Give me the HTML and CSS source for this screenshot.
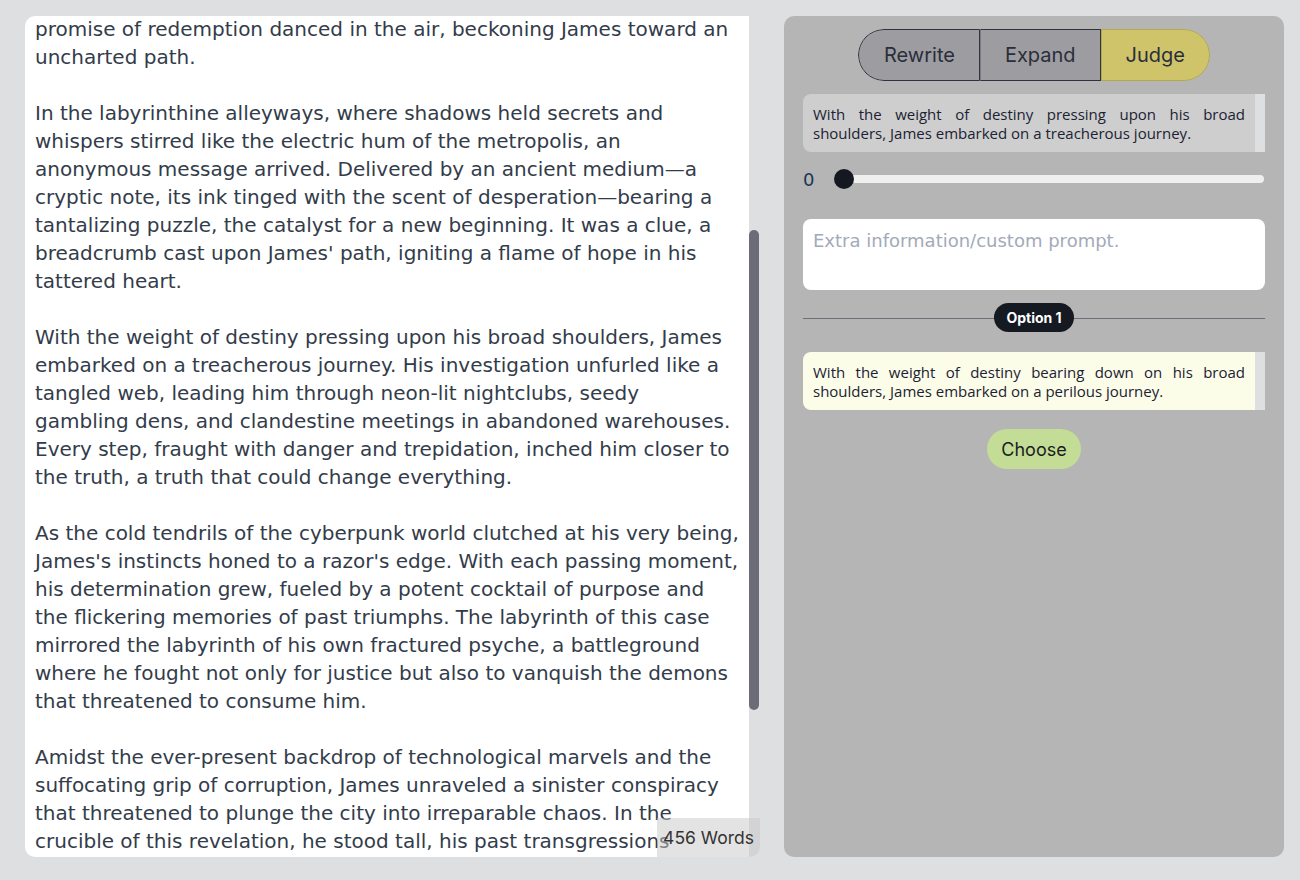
FILE: index.html
```html
<!DOCTYPE html>
<html lang="en">
<head>
<meta charset="utf-8">
<title>Story Editor</title>
<link rel="stylesheet" href="styles.css">
</head>
<body>
<div class="app">
  <section class="editor">
    <div class="editor-text">
      <p>promise of redemption danced in the air, beckoning James toward an<br>uncharted path.</p>
      <p>In the labyrinthine alleyways, where shadows held secrets and<br>whispers stirred like the electric hum of the metropolis, an<br>anonymous message arrived. Delivered by an ancient medium—a<br>cryptic note, its ink tinged with the scent of desperation—bearing a<br>tantalizing puzzle, the catalyst for a new beginning. It was a clue, a<br>breadcrumb cast upon James' path, igniting a flame of hope in his<br>tattered heart.</p>
      <p>With the weight of destiny pressing upon his broad shoulders, James<br>embarked on a treacherous journey. His investigation unfurled like a<br>tangled web, leading him through neon-lit nightclubs, seedy<br>gambling dens, and clandestine meetings in abandoned warehouses.<br>Every step, fraught with danger and trepidation, inched him closer to<br>the truth, a truth that could change everything.</p>
      <p>As the cold tendrils of the cyberpunk world clutched at his very being,<br>James's instincts honed to a razor's edge. With each passing moment,<br>his determination grew, fueled by a potent cocktail of purpose and<br>the flickering memories of past triumphs. The labyrinth of this case<br>mirrored the labyrinth of his own fractured psyche, a battleground<br>where he fought not only for justice but also to vanquish the demons<br>that threatened to consume him.</p>
      <p>Amidst the ever-present backdrop of technological marvels and the<br>suffocating grip of corruption, James unraveled a sinister conspiracy<br>that threatened to plunge the city into irreparable chaos. In the<br>crucible of this revelation, he stood tall, his past transgressions</p>
    </div>
    <div class="scrolltrack"><div class="scrollthumb"></div></div>
    <div class="wordcount">456 Words</div>
  </section>

  <aside class="panel">
    <div class="modes">
      <button class="mode">Rewrite</button>
      <button class="mode">Expand</button>
      <button class="mode active">Judge</button>
    </div>

    <div class="snippet original">
      <div class="snippet-text">With the weight of destiny pressing upon his broad shoulders, James embarked on a treacherous journey.</div>
      <div class="snippet-bar"></div>
    </div>

    <div class="slider-row">
      <span class="slider-value">0</span>
      <div class="slider">
        <div class="slider-track"></div>
        <div class="slider-thumb"></div>
      </div>
    </div>

    <div class="prompt">Extra information/custom prompt.</div>

    <div class="divider"><span class="option-pill">Option 1</span></div>

    <div class="snippet suggestion">
      <div class="snippet-text">With the weight of destiny bearing down on his broad shoulders, James embarked on a perilous journey.</div>
      <div class="snippet-bar"></div>
    </div>

    <div class="choose-wrap"><button class="choose">Choose</button></div>
  </aside>
</div>
</body>
</html>
```
FILE: styles.css
```css
* { box-sizing: border-box; }

html, body {
  margin: 0;
  padding: 0;
  background: #dedfe1;
  height: 880px;
  overflow: hidden;
}

.app {
  display: flex;
  gap: 24px;
  padding: 16px 16px 0 25px;
}

/* ---------- editor ---------- */
.editor {
  position: relative;
  width: 735px;
  height: 841px;
  display: flex;
  border-radius: 10px;
  overflow: hidden;
}

.editor-text {
  flex: 1;
  background: #ffffff;
  padding: 0 0 0 10px;
  overflow: hidden;
  font-family: "DejaVu Sans", sans-serif;
  font-size: 20px;
  line-height: 28px;
  color: #333c4a;
}

.editor-text p {
  margin: 0 0 28px;
  white-space: nowrap;
}

.editor-text p:first-child {
  margin-top: -1px;
}

.scrolltrack {
  width: 11px;
  background: #dedfe1;
  padding-top: 214px;
}

.scrollthumb {
  width: 10px;
  height: 480px;
  background: #6c6c78;
  border-radius: 5px;
}

.wordcount {
  position: absolute;
  right: 0;
  bottom: 0;
  width: 103px;
  height: 39px;
  display: flex;
  align-items: center;
  justify-content: center;
  background: rgba(200, 200, 202, 0.5);
  border-radius: 0 0 10px 0;
  font-family: "Inter", sans-serif;
  font-size: 17.5px;
  color: #333333;
}

/* ---------- side panel ---------- */
.panel {
  width: 500px;
  height: 841px;
  background: #b5b5b5;
  border-radius: 10px;
  padding: 13px 19px;
  display: flex;
  flex-direction: column;
}

.modes {
  align-self: center;
  display: flex;
  height: 52px;
  border-radius: 26px;
  overflow: hidden;
}

.mode {
  font-family: "Inter", sans-serif;
  font-size: 20px;
  color: #2a2e3a;
  background: #9d9ca1;
  border: 1px solid #30333f;
  border-left: 1px solid #7b7b82;
  padding: 0 24px;
  margin: 0;
  height: 52px;
}

.mode:first-child {
  border-left: 1px solid #30333f;
  border-radius: 26px 0 0 26px;
  padding-left: 25px;
}

.mode.active {
  background: #d0c46a;
  border: 1px solid #b3a750;
  border-radius: 0 26px 26px 0;
  padding: 0 24px 0 24px;
}

.snippet {
  margin-top: 13px;
  display: flex;
  height: 58px;
  border-radius: 8px 0 0 8px;
  overflow: hidden;
}

.snippet-text {
  flex: 1;
  padding: 11px 10px 8px;
  font-family: "Open Sans", sans-serif;
  font-size: 15px;
  line-height: 19px;
  color: #1b2233;
  text-align: justify;
}

.snippet-bar {
  width: 10px;
  background: #dedfe1;
}

.original .snippet-text { background: #cecece; }
.suggestion .snippet-text { background: #fbfde9; }
.suggestion { margin-top: 20px; }

.slider-row {
  margin-top: 17px;
  height: 20px;
  display: flex;
  align-items: center;
}

.slider-value {
  width: 31px;
  font-family: "DejaVu Sans", sans-serif;
  font-size: 18px;
  color: #1d3553;
}

.slider {
  position: relative;
  flex: 1;
  height: 20px;
}

.slider-track {
  position: absolute;
  left: 10px;
  right: 1px;
  top: 6px;
  height: 8px;
  border-radius: 4px;
  background: #efefef;
}

.slider-thumb {
  position: absolute;
  left: 0;
  top: 0;
  width: 20px;
  height: 20px;
  border-radius: 50%;
  background: #151820;
}

.prompt {
  margin-top: 30px;
  height: 71px;
  background: #ffffff;
  border-radius: 8px;
  padding: 11px 10px;
  font-family: "DejaVu Sans", sans-serif;
  font-size: 18px;
  line-height: 22px;
  color: #a3aab8;
}

.divider {
  margin-top: 13px;
  height: 29px;
  display: flex;
  align-items: center;
  justify-content: center;
  background: linear-gradient(#6f6e78, #6f6e78) left 15px / 100% 1px no-repeat;
}

.option-pill {
  background: #151922;
  color: #ffffff;
  font-family: "Inter", sans-serif;
  font-weight: 700;
  font-size: 14px;
  height: 29px;
  line-height: 29px;
  padding: 0 12px;
  border-radius: 15px;
}

.choose-wrap {
  margin-top: 19px;
  display: flex;
  justify-content: center;
}

.choose {
  height: 40px;
  padding: 0 14px;
  border: none;
  border-radius: 20px;
  background: #c3dc96;
  font-family: "Inter", sans-serif;
  font-size: 18px;
  color: #1a1c1f;
}
```
